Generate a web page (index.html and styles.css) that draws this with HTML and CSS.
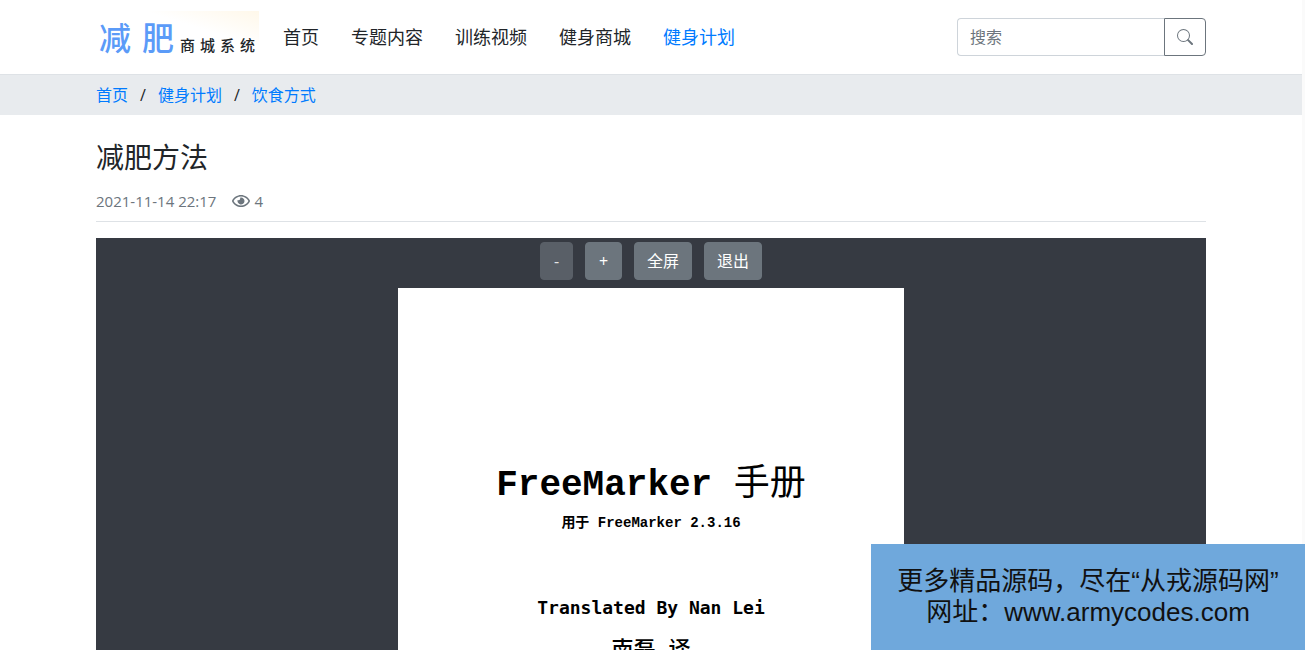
FILE: index.html
```html
<!DOCTYPE html>
<html lang="zh-CN">
<head>
    <meta charset="UTF-8">
    <meta name="viewport" content="width=device-width, initial-scale=1.0">
    <title>减肥方法</title>
    <link rel="stylesheet" href="styles.css">
</head>
<body>

    <!-- Header -->
    <header class="header">
        <div class="container navbar">
            <a class="logo" href="#">
                <span class="logo-main"><span>减</span><span>肥</span></span>
                <span class="logo-sub"><span>商</span><span>城</span><span>系</span><span>统</span></span>
            </a>
            <nav class="nav">
                <a href="#">首页</a>
                <a href="#">专题内容</a>
                <a href="#">训练视频</a>
                <a href="#">健身商城</a>
                <a href="#" class="active">健身计划</a>
            </nav>
            <form class="search">
                <input type="text" placeholder="搜索" aria-label="搜索">
                <button type="button" aria-label="搜索">
                    <svg width="16" height="16" viewBox="0 0 16 16" fill="currentColor">
                        <path d="M10.442 10.442a1 1 0 0 1 1.415 0l3.85 3.85a1 1 0 0 1-1.414 1.415l-3.85-3.85a1 1 0 0 1 0-1.415z"/>
                        <path d="M6.5 12a5.5 5.5 0 1 0 0-11 5.5 5.5 0 0 0 0 11zM13 6.5a6.5 6.5 0 1 1-13 0 6.5 6.5 0 0 1 13 0z"/>
                    </svg>
                </button>
            </form>
        </div>
    </header>

    <!-- Breadcrumb -->
    <div class="breadcrumb-bar">
        <div class="container breadcrumb">
            <a href="#">首页</a>
            <span>/</span>
            <a href="#">健身计划</a>
            <span>/</span>
            <a href="#">饮食方式</a>
        </div>
    </div>

    <!-- Article -->
    <main class="container article">
        <h1>减肥方法</h1>
        <div class="meta">
            <span>2021-11-14 22:17</span>
            <span class="views">
                <svg width="18" height="16" viewBox="0 0 576 512" fill="currentColor">
                    <path d="M288 144a110.94 110.94 0 0 0-31.24 5 55.4 55.4 0 0 1 7.24 27 56 56 0 0 1-56 56 55.4 55.4 0 0 1-27-7.24A111.71 111.71 0 1 0 288 144zm284.52 97.4C518.29 135.59 410.93 64 288 64S57.68 135.64 3.48 241.41a32.35 32.35 0 0 0 0 29.19C57.71 376.41 165.07 448 288 448s230.32-71.64 284.52-177.4a32.35 32.35 0 0 0 0-29.19zM288 400c-98.65 0-189.09-55-237.93-144C98.91 167 189.34 112 288 112s189.09 55 237.93 144C477.1 345 386.66 400 288 400z"/>
                </svg>
                4
            </span>
        </div>

        <!-- PDF viewer -->
        <section class="viewer">
            <div class="toolbar">
                <button type="button" class="btn btn-zoom-out" disabled>-</button>
                <button type="button" class="btn btn-zoom-in">+</button>
                <button type="button" class="btn">全屏</button>
                <button type="button" class="btn">退出</button>
            </div>
            <div class="page">
                <h2>FreeMarker <span>手册</span></h2>
                <p class="version">用于 FreeMarker 2.3.16</p>
                <p class="translator">Translated By Nan Lei</p>
                <p class="translator-cn">南磊 译</p>
            </div>
        </section>
    </main>

    <!-- Notice in the corner -->
    <aside class="notice">
        <div>更多精品源码，尽在“从戎源码网”</div>
        <div>网址：www.armycodes.com</div>
    </aside>

</body>
</html>
```
FILE: styles.css
```css
* {
    box-sizing: border-box;
}
html {
    background-color: #fafafa;
}
body {
    height: 100vh;
    margin: 0 3px 0 0;
    overflow: hidden;
    background-color: #fff;
    color: #212529;
    font-family: "Open Sans", "Noto Sans CJK SC", sans-serif;
    font-size: 16px;
    line-height: 24px;
}
a {
    color: #007bff;
    text-decoration: none;
}
button,
input {
    font: inherit;
}
.container {
    width: 100%;
    max-width: 1140px;
    margin: 0 auto;
    padding: 0 15px;
}

/* header */
.header {
    border-bottom: 1px solid #dee2e6;
}
.navbar {
    display: flex;
    align-items: center;
    height: 74px;
}
.logo {
    display: flex;
    align-items: flex-end;
    gap: 6px;
    width: 163px;
    height: 52px;
    margin-right: 24px;
    padding: 0 2px 6px 3px;
    background: linear-gradient(to top right, #fff 65%, #fff8ea);
    color: #212529;
    font-family: "Noto Sans CJK SC", sans-serif;
}
.logo-main,
.logo-sub {
    display: flex;
}
.logo-main {
    gap: 11px;
    color: #5b9bf8;
    font-size: 32px;
    font-weight: 500;
    line-height: 42px;
}
.logo-sub {
    gap: 5px;
    font-size: 15px;
    font-weight: 500;
    line-height: 24px;
}
.nav {
    display: flex;
    gap: 32px;
    font-size: 18px;
}
.nav a {
    color: #212529;
}
.nav a.active {
    color: #007bff;
}
.search {
    display: flex;
    width: 249px;
    height: 38px;
    margin-left: auto;
}
.search input {
    flex: 1;
    min-width: 0;
    padding: 6px 12px;
    border: 1px solid #ced4da;
    border-right: none;
    border-radius: 4px 0 0 4px;
    background-color: #fff;
}
.search input::placeholder {
    color: #6c757d;
    opacity: 1;
}
.search button {
    display: flex;
    align-items: center;
    justify-content: center;
    width: 42px;
    padding: 0;
    border: 1px solid #6c757d;
    border-radius: 0 4px 4px 0;
    background-color: #fff;
    color: #6c757d;
}

/* breadcrumb */
.breadcrumb-bar {
    background-color: #e8ebee;
}
.breadcrumb {
    display: flex;
    gap: 12px;
    padding-top: 8px;
    padding-bottom: 8px;
}

/* article */
.article h1 {
    margin: 25px 0 15px;
    font-size: 28px;
    font-weight: 400;
    line-height: 34px;
}
.meta {
    display: flex;
    gap: 16px;
    margin-bottom: 16px;
    padding-bottom: 8px;
    border-bottom: 1px solid #dee2e6;
    color: #6c757d;
    font-size: 15px;
}
.views {
    display: flex;
    align-items: center;
    gap: 4px;
}
.viewer {
    padding-top: 4px;
    background-color: #363a42;
}
.toolbar {
    display: flex;
    justify-content: center;
    gap: 12px;
    margin-bottom: 8px;
}
.btn {
    height: 38px;
    padding: 6px 12px;
    border: 1px solid #6c757d;
    border-radius: 4px;
    background-color: #6c757d;
    color: #fff;
}
.btn:disabled {
    border-color: #595f67;
    background-color: #595f67;
    color: #e4e5e6;
}
.btn-zoom-out {
    min-width: 33px;
}
.btn-zoom-in {
    min-width: 37px;
}

/* document page */
.page {
    max-width: 506px;
    min-height: 716px;
    margin: 0 auto;
    padding-top: 174px;
    background-color: #fff;
    color: #000;
    font-family: "Liberation Mono", "Noto Sans CJK SC", monospace;
    text-align: center;
}
.page h2 {
    margin: 0 0 4px;
    font-size: 36px;
    line-height: 48px;
}
.page h2 span {
    font-weight: 400;
}
.page p {
    margin: 0;
}
.version {
    font-size: 14px;
    font-weight: 600;
    line-height: 18px;
}
.page .translator {
    margin-top: 64px;
    font-family: "DejaVu Sans Mono", monospace;
    font-size: 18px;
    font-weight: bold;
    line-height: 24px;
}
.page .translator-cn {
    margin-top: 20px;
    font-size: 22px;
    font-weight: 500;
    line-height: 24px;
}

/* notice */
.notice {
    position: fixed;
    right: 0;
    bottom: 0;
    width: 434px;
    padding: 22px 0;
    background-color: #6fa8dc;
    color: #111;
    font-family: "Liberation Sans", "Noto Sans CJK SC", sans-serif;
    font-size: 26px;
    line-height: 31px;
    text-align: center;
}
```
